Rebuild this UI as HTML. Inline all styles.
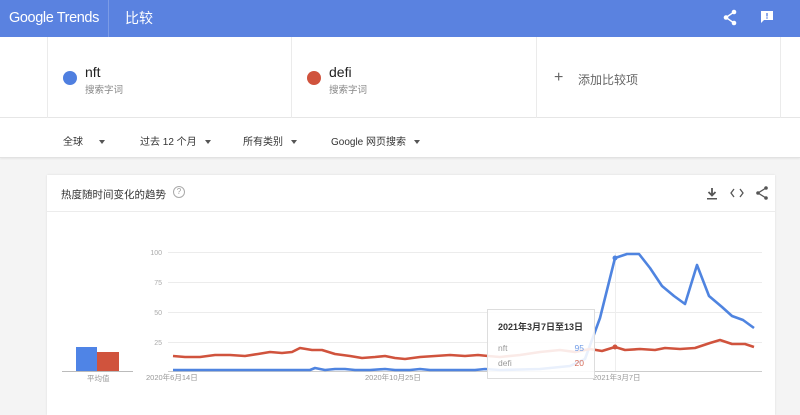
<!DOCTYPE html>
<html><head><meta charset="utf-8"><style>
*{margin:0;padding:0;box-sizing:border-box}
body{width:800px;height:404px;overflow:hidden;background:#f4f4f4;font-family:"Liberation Sans","Noto Sans CJK SC",sans-serif;position:relative}
.hdr{position:absolute;left:0;top:0;width:800px;height:37px;background:#5a82e0}
.abs{position:absolute}
.cmp{position:absolute;left:0;top:37px;width:800px;height:81px;background:#fff;border-bottom:1px solid #e6e6e6}
.cell{position:absolute;top:0;height:81px;border-left:1px solid #ebebeb}
.dot{position:absolute;width:14px;height:14px;border-radius:50%}
.term{position:absolute;font-size:14px;color:#222}
.sub{position:absolute;font-size:9.5px;color:#888}
.flt{position:absolute;left:0;top:118px;width:800px;height:40px;background:#fff;border-bottom:1px solid #e2e2e2;box-shadow:0 1px 2px rgba(0,0,0,.06)}
.f{position:absolute;top:15px;font-size:10px;color:#333}
.tri{display:inline-block;width:0;height:0;border-left:3.5px solid transparent;border-right:3.5px solid transparent;border-top:4px solid #555;vertical-align:middle;margin-left:8px}
.card{position:absolute;left:47px;top:175px;width:728px;height:240px;background:#fff;box-shadow:0 0 2px rgba(0,0,0,.1)}
</style></head><body>
<div class="hdr">
<div class="abs" style="left:9px;top:10px;font-size:14.5px;color:#fff;letter-spacing:-0.4px">Google Trends</div>
<div class="abs" style="left:108px;top:0;width:1px;height:37px;background:rgba(255,255,255,.2)"></div>
<div class="abs" style="left:125px;top:8px;font-size:14px;color:#fff">比较</div>
<svg class="abs" style="left:722px;top:9px" width="16" height="17" viewBox="0 0 16 17"><circle cx="12" cy="3" r="2.3" fill="#fff"/><circle cx="4" cy="8.5" r="2.3" fill="#fff"/><circle cx="12" cy="14" r="2.3" fill="#fff"/><path d="M12 3L4 8.5L12 14" stroke="#fff" stroke-width="1.4" fill="none"/></svg>
<svg class="abs" style="left:760px;top:10px" width="14" height="14" viewBox="0 0 14 14"><path d="M1 1h12v9H4l-3 3z" fill="#fff"/><rect x="6.3" y="3" width="1.4" height="3.5" fill="#5a82e0"/><rect x="6.3" y="7.3" width="1.4" height="1.4" fill="#5a82e0"/></svg>
</div>
<div class="cmp">
<div class="cell" style="left:47px;width:244px">
<div class="dot" style="left:15px;top:34px;background:#4f7fe0"></div>
<div class="term" style="left:37px;top:27px">nft</div>
<div class="sub" style="left:37px;top:45px">搜索字词</div>
</div>
<div class="cell" style="left:291px;width:245px">
<div class="dot" style="left:15px;top:34px;background:#d0533d"></div>
<div class="term" style="left:37px;top:27px">defi</div>
<div class="sub" style="left:37px;top:45px">搜索字词</div>
</div>
<div class="cell" style="left:536px;width:245px;border-right:1px solid #ebebeb">
<div class="abs" style="left:17px;top:33px;font-size:16px;color:#666;line-height:16px">+</div>
<div class="abs" style="left:41px;top:34px;font-size:12px;color:#666">添加比较项</div>
</div>
</div>
<div class="flt">
<div class="f" style="left:63px">全球<span class="tri" style="margin-left:16px"></span></div>
<div class="f" style="left:140px">过去 12 个月<span class="tri"></span></div>
<div class="f" style="left:243px">所有类别<span class="tri"></span></div>
<div class="f" style="left:331px">Google 网页搜索<span class="tri"></span></div>
</div>
<div class="card">
<div class="abs" style="left:14px;top:12px;font-size:10.5px;color:#333">热度随时间变化的趋势</div>
<div class="abs" style="left:126px;top:11px;width:12px;height:12px;border:1px solid #aaa;border-radius:50%;font-size:8px;color:#999;text-align:center;line-height:10px">?</div>
<div class="abs" style="left:0;top:36px;width:728px;height:1px;background:#ececec"></div>
<svg class="abs" style="left:659px;top:12px" width="12" height="13" viewBox="0 0 12 13"><path d="M6 1v7M2.5 5L6 8.5L9.5 5" stroke="#555" stroke-width="1.8" fill="none"/><rect x="1" y="11" width="10" height="1.5" fill="#555"/></svg>
<svg class="abs" style="left:683px;top:13px" width="14" height="10" viewBox="0 0 14 10"><path d="M4 1L1 5l3 4M10 1l3 4-3 4" stroke="#555" stroke-width="1.3" fill="none"/></svg>
<svg class="abs" style="left:709px;top:11px" width="12" height="14" viewBox="0 0 12 14"><circle cx="10" cy="2" r="1.8" fill="#555"/><circle cx="2" cy="7" r="1.8" fill="#555"/><circle cx="10" cy="12" r="1.8" fill="#555"/><path d="M10 2L2 7l8 5" stroke="#555" stroke-width="1.3" fill="none"/></svg>
</div>
<svg class="abs" style="left:0;top:0" width="800" height="404" viewBox="0 0 800 404">
<g stroke="#ececec" stroke-width="1">
<line x1="168" y1="252.5" x2="762" y2="252.5"/><line x1="168" y1="282.5" x2="762" y2="282.5"/><line x1="168" y1="312.5" x2="762" y2="312.5"/><line x1="168" y1="342.5" x2="762" y2="342.5"/>
</g>
<line x1="168" y1="371.5" x2="762" y2="371.5" stroke="#ccc"/>
<line x1="615.5" y1="252" x2="615.5" y2="371" stroke="#eee"/>
<g font-size="7" fill="#aaa" text-anchor="end" font-family="Liberation Sans,sans-serif">
<text x="162" y="255">100</text><text x="162" y="285">75</text><text x="162" y="315">50</text><text x="162" y="345">25</text>
</g>
<g font-size="7.5" fill="#999" font-family="Liberation Sans,Noto Sans CJK SC,sans-serif">
<text x="146" y="380">2020年6月14日</text><text x="365" y="380">2020年10月25日</text><text x="593" y="380">2021年3月7日</text>
</g>
<rect x="76" y="347" width="21" height="24" fill="#4f84e6"/>
<rect x="97" y="352" width="22" height="19" fill="#d0533d"/>
<line x1="62" y1="371.5" x2="133" y2="371.5" stroke="#bbb"/>
<text x="87" y="381" font-size="7.5" fill="#999" font-family="Liberation Sans,Noto Sans CJK SC,sans-serif">平均值</text>
<polyline fill="none" stroke="#4f84e0" stroke-width="2.6" stroke-linejoin="round" points="173,370 310,370 315,368 325,370 335,369 345,369 355,370 370,370 385,369 395,370 410,370 420,369 430,370 475,370 485,369 500,370 540,369 570,366 585,359 600,318 615,258 627,254 639,254 650,268 662,286 674,296 685,304 697,265 709,296 722,307 732,316 743,320 754,328"/>
<polyline fill="none" stroke="#d0533d" stroke-width="2.6" stroke-linejoin="round" points="173,356 185,357 200,357 215,355 230,355 245,356 258,354 270,352 282,353 292,352 300,348 312,350 322,350 335,354 350,356 362,358 375,357 385,356 395,358 405,359 420,357 435,356 450,355 465,356 478,355 488,356 500,357 520,355 540,352 560,350 575,352 590,349 602,351 615,347 625,350 640,349 655,350 665,348 680,349 695,348 710,343 720,340 732,344 745,344 754,347"/>
<circle cx="615" cy="258" r="2.5" fill="#4f84e0"/><circle cx="615" cy="347" r="2.5" fill="#d0533d"/>
<rect x="487.5" y="309.5" width="107" height="69" fill="rgba(255,255,255,0.88)" stroke="#ddd"/>
<g font-family="Liberation Sans,Noto Sans CJK SC,sans-serif">
<text x="498" y="330" font-size="9" font-weight="bold" fill="#333">2021年3月7日至13日</text>
<text x="498" y="351" font-size="8.5" fill="#999">nft</text><text x="584" y="351" font-size="8.5" fill="#6f9be6" text-anchor="end">95</text>
<text x="498" y="366" font-size="8.5" fill="#999">defi</text><text x="584" y="366" font-size="8.5" fill="#d56b58" text-anchor="end">20</text>
</g>
</svg>
</body></html>
